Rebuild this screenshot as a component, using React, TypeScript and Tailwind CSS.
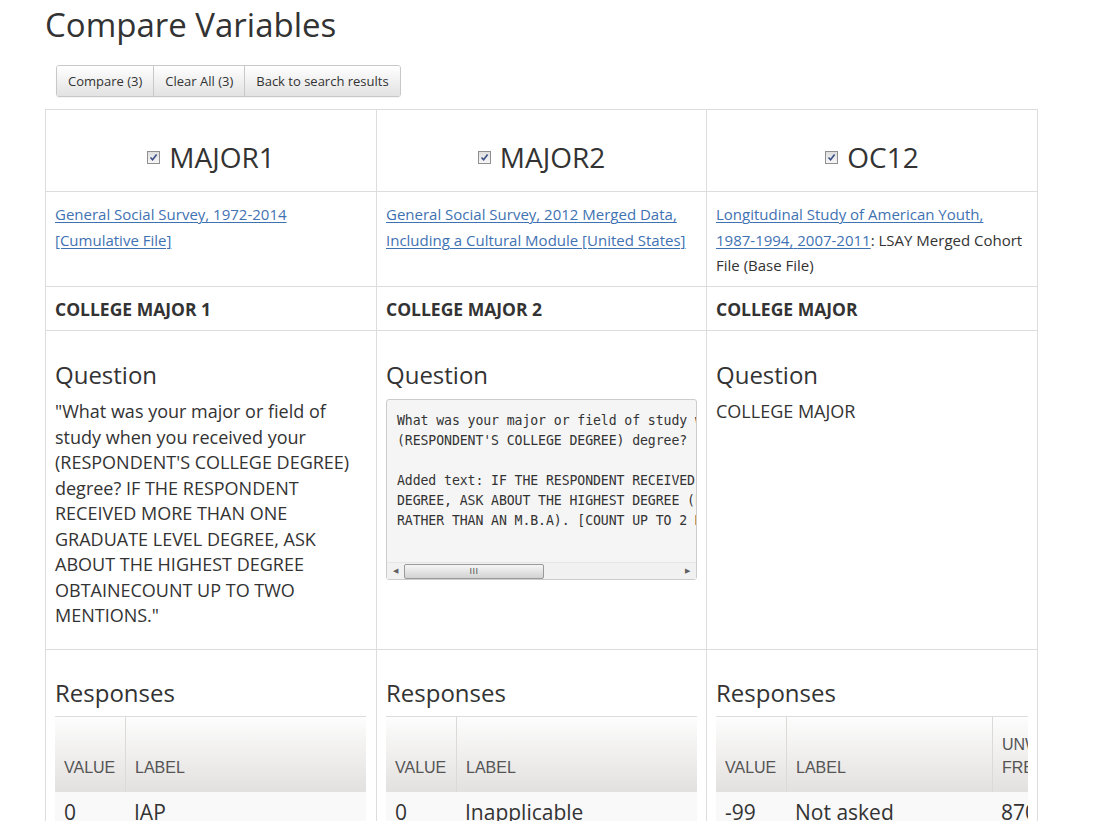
const sans = "font-['Open_Sans','Liberation_Sans',sans-serif]";

type Variable = {
  name: string;
  study: React.ReactNode;
  label: string;
  question: React.ReactNode;
  columns: string;
  headers: string[];
  row: string[];
};

function Checkbox() {
  return (
    <span className="inline-flex h-[13px] w-[13px] items-center justify-center border border-[#8f8f8f] bg-gradient-to-b from-[#dedede] to-[#f7f7f7]">
      <svg width="9" height="9" viewBox="0 0 9 9">
        <path d="M1.5 4.5 L3.6 6.8 L7.6 1.6" fill="none" stroke="#3b4f86" strokeWidth="1.6" />
      </svg>
    </span>
  );
}

function Link({ children }: { children: React.ReactNode }) {
  return <a className="text-[#3f72b2] underline underline-offset-2 decoration-1">{children}</a>;
}

function FakeScrollbar() {
  return (
    <div className="flex h-[17px] items-center bg-[#f1f1f1] border-t border-[#e6e6e6]">
      <div className="flex w-[17px] items-center justify-center text-[7px] text-[#606060]">◀</div>
      <div className="flex h-[15px] w-[140px] items-center justify-center rounded-[2px] border border-[#9a9a9a] bg-gradient-to-b from-[#f6f6f6] via-[#e4e4e4] to-[#d2d2d2]">
        <span className="font-['Liberation_Sans',sans-serif] text-[9px] leading-none tracking-[0.5px] text-[#555]">III</span>
      </div>
      <div className="flex-1" />
      <div className="flex w-[17px] items-center justify-center text-[7px] text-[#606060]">▶</div>
    </div>
  );
}

const preText = `What was your major or field of study when you received your
(RESPONDENT'S COLLEGE DEGREE) degree?

Added text: IF THE RESPONDENT RECEIVED MORE THAN ONE GRADUATE LEVEL
DEGREE, ASK ABOUT THE HIGHEST DEGREE (E.G., ASK ABOUT A PH.D.
RATHER THAN AN M.B.A). [COUNT UP TO 2 MENTIONS.]`;

const variables: Variable[] = [
  {
    name: "MAJOR1",
    study: <Link>General Social Survey, 1972-2014 [Cumulative File]</Link>,
    label: "COLLEGE MAJOR 1",
    question: (
      <p className="text-[18px] leading-[25.5px]">
        "What was your major or field of study when you received your (RESPONDENT'S COLLEGE DEGREE) degree? IF THE
        RESPONDENT RECEIVED MORE THAN ONE GRADUATE LEVEL DEGREE, ASK ABOUT THE HIGHEST DEGREE OBTAINECOUNT UP TO TWO
        MENTIONS."
      </p>
    ),
    columns: "grid-cols-[70px_241px]",
    headers: ["VALUE", "LABEL"],
    row: ["0", "IAP"],
  },
  {
    name: "MAJOR2",
    study: <Link>General Social Survey, 2012 Merged Data, Including a Cultural Module [United States]</Link>,
    label: "COLLEGE MAJOR 2",
    question: (
      <div className="rounded-[3px] border border-[#cccccc] bg-[#f5f5f5]">
        <pre className="h-[162px] overflow-hidden pl-[10px] pt-[11px] font-['DejaVu_Sans_Mono','Liberation_Mono',monospace] text-[13.2px] leading-[20px] tracking-[-0.1px] text-[#333]">
          {preText}
        </pre>
        <FakeScrollbar />
      </div>
    ),
    columns: "grid-cols-[70px_241px]",
    headers: ["VALUE", "LABEL"],
    row: ["0", "Inapplicable"],
  },
  {
    name: "OC12",
    study: (
      <>
        <Link>
          Longitudinal Study of American Youth, <span className="whitespace-nowrap">1987-1994,</span>{" "}
          <span className="whitespace-nowrap">2007-2011</span>
        </Link>
        : LSAY Merged Cohort File (Base File)
      </>
    ),
    label: "COLLEGE MAJOR",
    question: <p className="text-[18px] leading-[25.5px]">COLLEGE MAJOR</p>,
    columns: "grid-cols-[70px_206px_110px]",
    headers: ["VALUE", "LABEL", "UNWEIGHTED FREQUENCY"],
    row: ["-99", "Not asked", "8704"],
  },
];

function Responses({ v }: { v: Variable }) {
  return (
    <div className="overflow-hidden">
      <div className={`grid w-max ${v.columns} border-t border-[#dddddd]`}>
        {v.headers.map((h, i) => (
          <div
            key={h}
            className={`flex h-[75px] items-end bg-gradient-to-b from-[#fdfdfd] to-[#e3e1df] pb-[13px] pl-[9px] pr-2 font-['Liberation_Sans',sans-serif] text-[16px] leading-[23px] text-[#555] ${
              i > 0 ? "border-l border-[#dcdad8]" : ""
            }`}
          >
            <span>{h}</span>
          </div>
        ))}
        {v.row.map((c, i) => (
          <div key={i} className="bg-[#f9f9f9] px-[9px] pt-[6px] text-[21px] leading-[28px] text-[#333]">
            {c}
          </div>
        ))}
      </div>
    </div>
  );
}

export default function App() {
  const cell = "border-r border-b border-[#dddddd] px-[9px]";
  return (
    <div className={`${sans} min-h-[821px] bg-white pl-[45px] text-[#333]`}>
      <h1 className="pt-[5px] text-[33px] leading-[40px] text-[#333]">Compare Variables</h1>

      <div className="ml-[11px] mt-[20px] inline-flex h-[32px] overflow-hidden rounded-[3px] border border-[#c8c8c8] text-[13px] shadow-[0_1px_1px_rgba(0,0,0,0.05)]">
        {["Compare (3)", "Clear All (3)", "Back to search results"].map((b, i) => (
          <button
            key={b}
            className={`bg-gradient-to-b from-[#ffffff] to-[#e2e2e2] px-[11px] pt-[1px] text-[#333] ${i > 0 ? "border-l border-[#c8c8c8]" : ""}`}
          >
            {b}
          </button>
        ))}
      </div>

      <div className="mt-[12px] grid w-[993px] grid-cols-[331px_330px_331px] grid-rows-[82px_95px_44px_319px_auto] border-l border-t border-[#dddddd]">
        {variables.map((v) => (
          <div key={v.name} className={`${cell} flex items-center justify-center gap-[9px] pt-[13px]`}>
            <Checkbox />
            <span className="text-[28px] leading-[40px]">{v.name}</span>
          </div>
        ))}
        {variables.map((v) => (
          <div key={v.name} className={`${cell} pt-[10px] text-[15px] leading-[25.5px]`}>
            {v.study}
          </div>
        ))}
        {variables.map((v) => (
          <div key={v.name} className={`${cell} pt-[10px] text-[17.5px] font-bold leading-[24px]`}>
            {v.label}
          </div>
        ))}
        {variables.map((v) => (
          <div key={v.name} className={`${cell} pt-[11px]`}>
            <h3 className="mt-[20px] mb-[11px] text-[24px] leading-[26.4px]">Question</h3>
            {v.question}
          </div>
        ))}
        {variables.map((v) => (
          <div key={v.name} className={`${cell} pt-[10px]`}>
            <h3 className="mt-[20px] mb-[10px] text-[24px] leading-[26.4px]">Responses</h3>
            <Responses v={v} />
          </div>
        ))}
      </div>
    </div>
  );
}
